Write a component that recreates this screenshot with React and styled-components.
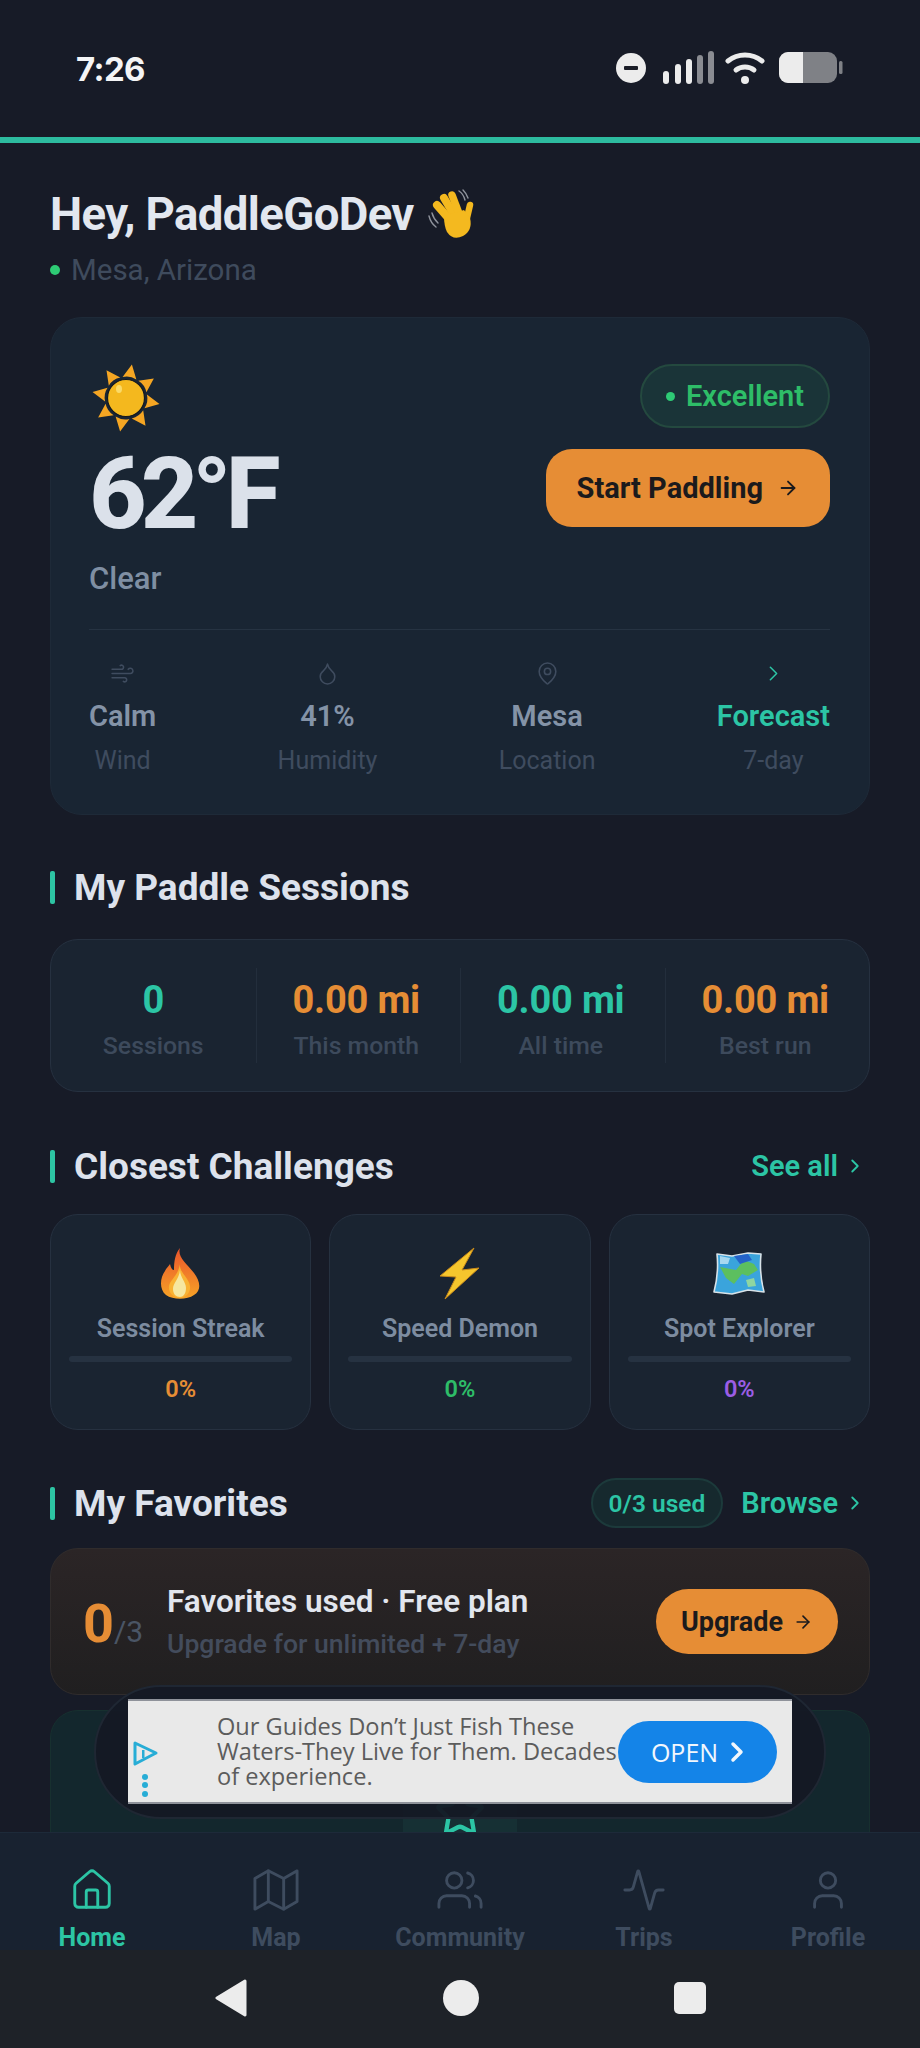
import React from "react";
import styled, { createGlobalStyle } from "styled-components";
import { House, Activity, User, Wind, Droplet, MapPin, ChevronRight, ArrowRight, Star } from "lucide-react";

const Global = createGlobalStyle`
  html, body { margin: 0; padding: 0; background: #171b27; }
  * { box-sizing: border-box; }
  body { font-family: Roboto, "Noto Sans", sans-serif; }
`;

const Page = styled.div`
  position: relative; width: 920px; height: 2048px; overflow: hidden;
  display: flex; flex-direction: column; background: #171b27;
`;

const StatusBar = styled.div`
  height: 143px; flex: none; border-bottom: 6px solid #2dbb9f; padding: 0 76px 6px;
  display: flex; align-items: center; justify-content: space-between;
`;
const Clock = styled.div`
  font: 700 33px/1 Inter, sans-serif; color: #f4f5f6; letter-spacing: -0.6px; margin-top: 7px;
`;
const StatusIcons = styled.svg` display: block; margin-right: -5px; margin-top: 5px; `;

const Main = styled.main`
  flex: 1; min-height: 0; overflow: hidden; padding: 47px 50px 0;
`;
const Greeting = styled.h1`
  margin: 0; height: 48px; display: flex; align-items: center; gap: 12px;
  font-size: 45.5px; font-weight: 700; color: #e2e7ef; letter-spacing: -0.6px; white-space: nowrap;
`;
const Place = styled.div`
  display: flex; align-items: center; gap: 11px; height: 40px; margin-top: 12px;
  font-size: 29.5px; color: #3f4b5d;
`;
const Dot = styled.span`
  width: ${p => p.$s || 10}px; height: ${p => p.$s || 10}px; border-radius: 50%; background: #2ecb75; flex: none;
`;

const WeatherCard = styled.section`
  margin-top: 27px; height: 498px; padding: 45px 39px 0 38px; border-radius: 32px;
  background: #192533; border: 1px solid #1e2a38; display: flex; flex-direction: column;
`;
const WeatherTop = styled.div`
  display: flex; justify-content: space-between; height: 267px; border-bottom: 1px solid #263342;
`;
const Conditions = styled.div` display: flex; flex-direction: column; `;
const Temp = styled.div`
  font-size: 100px; line-height: 1; font-weight: 800; color: #dbe1ea; letter-spacing: -6px; margin-top: 11px;
`;
const Sky = styled.div`
  font-size: 31px; font-weight: 500; color: #7f8fa3; margin-top: 18px; line-height: 34px;
`;
const Actions = styled.div` display: flex; flex-direction: column; align-items: flex-end; gap: 21px; padding-top: 1px; `;
const RatingPill = styled.div`
  height: 64px; padding: 0 24px; border-radius: 32px; display: flex; align-items: center; gap: 11px;
  background: #1a3438; border: 2px solid #24493f; color: #2ebd68; font-size: 29px; font-weight: 600;
`;
const PrimaryButton = styled.button`
  border: 0; background: #e68d35; color: #1b1a1c; font-family: inherit; font-weight: 700; display: flex; align-items: center; flex: none;
  height: ${p => p.$h}px; padding: 0 ${p => p.$pad}px; border-radius: ${p => p.$r}px; font-size: ${p => p.$fs}px; gap: ${p => p.$gap}px;
`;
const WeatherFacts = styled.div`
  display: flex; justify-content: space-between; padding-top: 31px;
`;
const Fact = styled.div` display: flex; flex-direction: column; align-items: center; `;
const FactValue = styled.div`
  font-size: 29px; font-weight: 600; line-height: 34px; margin-top: 13px; color: ${p => p.$accent ? "#2cc5a5" : "#8493a7"};
`;
const FactLabel = styled.div`
  font-size: 25px; line-height: 30px; margin-top: 13px; color: #3f4c5f;
`;

const SectionHead = styled.div`
  display: flex; align-items: center; justify-content: space-between; height: 50px; margin-top: ${p => p.$mt}px;
`;
const SectionTitle = styled.h2`
  margin: 0; display: flex; align-items: center; gap: 19px; font-size: 37px; font-weight: 700; color: #dde2ec;
  &::before { content: ""; width: 5px; height: 33px; border-radius: 2px; background: #2dc4a3; }
`;
const HeadRight = styled.div` display: flex; align-items: center; gap: 18px; `;
const HeadLink = styled.div`
  display: flex; align-items: center; gap: 6px; margin-right: 4px; font-size: 29px; font-weight: 600; color: #2cc5a5;
`;
const UsedPill = styled.div`
  height: 50px; padding: 0 16px; border-radius: 25px; display: flex; align-items: center;
  background: #16292e; border: 2px solid #1c3a3b; color: #2cc5a5; font-size: 24.5px; font-weight: 600;
`;

const Panel = styled.div`
  background: #1a2431; border: 1px solid #263140; border-radius: 28px;
`;
const StatsPanel = styled(Panel)`
  margin-top: 27px; height: 153px; padding: 28px 0; display: grid; grid-template-columns: repeat(4, 1fr);
`;
const Stat = styled.div`
  display: flex; flex-direction: column; align-items: center; padding-top: 12px;
  & + & { border-left: 1px solid #232e3c; padding-right: 4px; }
`;
const StatValue = styled.div`
  font-size: 38px; line-height: 40px; font-weight: 700; letter-spacing: -0.2px; color: ${p => p.$c};
`;
const StatLabel = styled.div`
  font-size: 24.8px; line-height: 30px; margin-top: 11px; font-weight: 500; color: #3d4a5c;
`;

const ChallengeGrid = styled.div`
  margin-top: 23px; display: grid; grid-template-columns: repeat(3, 1fr); gap: 18px;
`;
const ChallengeCard = styled(Panel)`
  height: 216px; padding: 25px 18px 0; display: flex; flex-direction: column; align-items: center;
`;
const ChallengeArt = styled.svg` display: block; height: 70px; width: 70px; flex: none; `;
const ChallengeName = styled.div`
  font-size: 25px; font-weight: 600; line-height: 30px; margin-top: 4px; color: #7d8ca0; white-space: nowrap;
`;
const Track = styled.div`
  width: 100%; height: 6px; border-radius: 3px; background: #263241; margin-top: 12px; flex: none;
`;
const Percent = styled.div`
  font-size: 23.5px; font-weight: 600; line-height: 28px; margin-top: 13px; color: ${p => p.$c};
`;

const PlanCard = styled.div`
  margin-top: 20px; height: 147px; padding: 0 31px 0 32px; border-radius: 28px; display: flex; align-items: center;
  border: 1px solid #302c2c; background: linear-gradient(180deg, #2b2526 0%, #201f20 100%);
`;
const Count = styled.div`
  display: flex; align-items: baseline; width: 84px; flex: none; font-size: 54px; font-weight: 700; color: #e68d35; margin-top: 4px;
  small { font-size: 30px; font-weight: 400; color: #4a5565; }
`;
const PlanText = styled.div` flex: 1; white-space: nowrap; `;
const PlanTitle = styled.div` font-size: 31.5px; font-weight: 600; line-height: 36px; color: #e2e6ee; `;
const PlanSub = styled.div` font-size: 26.6px; font-weight: 500; line-height: 30px; margin-top: 9px; color: #434c5c; `;

const PromoCard = styled.div`
  margin-top: 15px; height: 300px; padding-top: 52px; border-radius: 28px; display: flex; justify-content: center; align-items: flex-start;
  border: 1px solid #17302f; background: #13272d;
`;
const PromoTile = styled.div`
  width: 114px; height: 100px; border-radius: 26px; display: flex; align-items: center; justify-content: center;
  background: #163034; color: #2cc5a5;
`;

const BottomNav = styled.nav`
  flex: none; height: 118px; background: #182230; border-top: 1px solid #1d2a39;
  display: grid; grid-template-columns: repeat(5, 1fr); padding-top: 34px;
`;
const NavItem = styled.div`
  display: flex; flex-direction: column; align-items: center; gap: 10px;
  color: ${p => p.$active ? "#2cc5a5" : "#3e4c5f"};
`;
const NavLabel = styled.div` font-size: 25px; font-weight: 700; line-height: 30px; `;

const SystemNav = styled.div`
  flex: none; height: 98px; background: #1e2228; display: flex; align-items: center; justify-content: center; gap: 195px; padding-bottom: 2px;
`;

const AdShell = styled.aside`
  position: absolute; left: 94px; top: 1685px; width: 732px; height: 134px; border-radius: 67px; padding: 12px 32px;
  background: rgba(21, 25, 36, 0.96); border: 2px solid #1f2733;
`;
const AdBanner = styled.div`
  width: 664px; height: 105px; background: #e9e9e9; display: flex; align-items: center; position: relative;
  border-top: 2px solid #8f929a; border-bottom: 2px solid #8f929a;
`;
const AdMark = styled.svg` position: absolute; left: 4px; top: 38px; `;
const AdCopy = styled.div`
  margin-left: 89px; width: 312px; flex: none; font-family: "Open Sans", sans-serif; white-space: nowrap; font-size: 23.6px; line-height: 25px; color: #5c5c5c;
`;
const AdOpen = styled.div`
  margin-left: 89px; width: 159px; height: 62px; border-radius: 31px; background: #1484e8; color: #f2f7fd;
  display: flex; align-items: center; justify-content: center; gap: 12px; font-family: "Open Sans", sans-serif; font-size: 25px;
`;

const strokeProps = { fill: "none", stroke: "currentColor", strokeWidth: 1.5, strokeLinecap: "round", strokeLinejoin: "round" };
const FoldedMap = ({ size }) => (
  <svg width={size} height={size} viewBox="0 0 24 24" {...strokeProps}>
    <path d="M1 6v16l7-4 8 4 7-4V2l-7 4-8-4z" />
    <path d="M8 2v16M16 6v16" />
  </svg>
);
const People = ({ size }) => (
  <svg width={size} height={size} viewBox="0 0 24 24" {...strokeProps}>
    <path d="M17 21v-2a4 4 0 0 0-4-4H5a4 4 0 0 0-4 4v2" />
    <circle cx="9" cy="7" r="4" />
    <path d="M23 21v-2a4 4 0 0 0-3-3.87" />
    <path d="M16 3.13a4 4 0 0 1 0 7.75" />
  </svg>
);

const Wave = () => (
  <svg width="52" height="56" viewBox="6 6 52 56" style={{ flex: "none" }}>
    <g fill="none" stroke="#f4b91f" strokeLinecap="round">
      <path d="M17 25 L31 41" strokeWidth="8" />
      <path d="M24 18 L36 38" strokeWidth="8" />
      <path d="M32 15 L40 36" strokeWidth="7.5" />
      <path d="M50 25 L46 42" strokeWidth="6.5" />
    </g>
    <path d="M24 36 L44 30 L50 38 Q53 50 43 56 Q33 61 27 52 Q24 46 24 36Z" fill="#f4b91f" />
    <g stroke="#8f939c" strokeWidth="1.4" fill="none" strokeLinecap="round">
      <path d="M39 11c3 2 5 5 6 9" />
      <path d="M43 10c3 3 4 5 5 8" />
      <path d="M9 36c1 4 3 8 7 11" />
      <path d="M12 33c1 4 3 7 6 10" />
    </g>
  </svg>
);

const Sun = () => (
  <svg width="70" height="70" viewBox="7 7 70 70" style={{ display: "block", flex: "none", marginLeft: 2 }}>
    <g fill="#f5a623">
      {[10, 55, 100, 145, 190, 235, 280, 325].map(a => (
        <path key={a} d="M42 8 L49 22 Q42 19 35 22 Z" transform={`rotate(${a} 42 42)`} />
      ))}
    </g>
    <circle cx="42" cy="42" r="18.5" fill="#f4b81e" stroke="#14181f" strokeWidth="1.2" />
    <ellipse cx="35" cy="33" rx="3" ry="4" fill="#fbe27a" opacity=".8" />
  </svg>
);

const Fire = () => (
  <ChallengeArt viewBox="-4 0 70 70">
    <defs>
      <linearGradient id="flame" x1="0" y1="0" x2="0" y2="1">
        <stop offset="0" stopColor="#e9542c" />
        <stop offset="1" stopColor="#f7a326" />
      </linearGradient>
    </defs>
    <path d="M30 8C27 17 37 24 44 33C50 41 52 50 44 55C37 60 23 60 16 55C9 49 10 38 15 31C16 28 19 26 20 24C21 28 22 30 24 30C24 22 25 14 30 8Z" fill="url(#flame)" />
    <path d="M30 24C29 32 39 38 40 46C41 53 35 58 30 58C24 58 18 53 19 46C20 40 28 36 30 24Z" fill="#f9b233" />
    <path d="M30 30C30 37 36 42 36 48C36 54 33 57 30 57C26 57 23 54 23 49C23 43 29 39 30 30Z" fill="#f6e7a0" />
  </ChallengeArt>
);
const Bolt = () => (
  <ChallengeArt viewBox="5 0 70 70">
    <path d="M54 8 20 36 36 37 25 59 59 28 42 30z" fill="#f6c62d" stroke="#c98a1a" strokeWidth="1" strokeLinejoin="round" />
  </ChallengeArt>
);
const WorldMap = () => (
  <ChallengeArt viewBox="0 0 70 70">
    <path d="M13 14 28 16 44 13 57 14Q55 33 60 52L44 50 28 54 10 52Q15 33 13 14Z" fill="#3aa4dc" stroke="#d7e2e8" strokeWidth="1.6" strokeLinejoin="round" />
    <path d="M16 27 32 30 40 20 50 24 54 30 44 36 38 34 30 44 22 38Z" fill="#5cbf5f" />
    <path d="M30 16 44 14 48 20 36 24Z" fill="#2463c9" />
    <path d="M16 16 26 18 24 24 16 24Z" fill="#a7d8f0" />
    <path d="M42 40 50 38 52 46 44 47Z" fill="#8fd6a0" />
  </ChallengeArt>
);

const facts = [
  { Icon: Wind, value: "Calm", label: "Wind" },
  { Icon: Droplet, value: "41%", label: "Humidity" },
  { Icon: MapPin, value: "Mesa", label: "Location" },
  { Icon: ChevronRight, value: "Forecast", label: "7-day", accent: true },
];
const stats = [
  { v: "0", l: "Sessions", c: "#2cc5a5" },
  { v: "0.00 mi", l: "This month", c: "#e68d35" },
  { v: "0.00 mi", l: "All time", c: "#2cc5a5" },
  { v: "0.00 mi", l: "Best run", c: "#e68d35" },
];
const challenges = [
  { Art: Fire, n: "Session Streak", c: "#e68d35" },
  { Art: Bolt, n: "Speed Demon", c: "#2ebd68" },
  { Art: WorldMap, n: "Spot Explorer", c: "#9b5de5" },
];
const navs = [
  { Icon: House, l: "Home", active: true },
  { Icon: FoldedMap, l: "Map" },
  { Icon: People, l: "Community" },
  { Icon: Activity, l: "Trips" },
  { Icon: User, l: "Profile" },
];

export default function App() {
  return (
    <Page>
      <Global />
      <StatusBar>
        <Clock>7:26</Clock>
        <StatusIcons width="233" height="36" viewBox="0 0 233 36">
          <circle cx="15" cy="18" r="15" fill="#ececec" />
          <rect x="8" y="16" width="14" height="4" rx="1" fill="#1a1d27" />
          <g fill="#ececec">
            <rect x="47" y="21" width="6" height="13" rx="3" />
            <rect x="59" y="14" width="6" height="20" rx="3" />
            <rect x="70" y="9" width="6" height="25" rx="3" />
            <rect x="81" y="5" width="6" height="29" rx="3" fill="#8a8c92" />
            <rect x="92" y="1" width="6" height="33" rx="3" fill="#8a8c92" />
          </g>
          <g fill="none" stroke="#ececec" strokeWidth="5" strokeLinecap="round">
            <path d="M112 11c10-8 24-8 34 0" />
            <path d="M120 20c5-4 13-4 18 0" />
          </g>
          <circle cx="129" cy="30" r="4" fill="#ececec" />
          <g transform="translate(3 0)">
            <rect x="160" y="2" width="58" height="31" rx="9" fill="#7f8186" />
            <path d="M169 2h15v31h-15a9 9 0 0 1-9-9V11a9 9 0 0 1 9-9z" fill="#ececec" />
            <rect x="220" y="11" width="3.5" height="13" rx="1.5" fill="#7f8186" />
          </g>
        </StatusIcons>
      </StatusBar>

      <Main>
        <Greeting>Hey, PaddleGoDev <Wave /></Greeting>
        <Place><Dot />Mesa, Arizona</Place>

        <WeatherCard>
          <WeatherTop>
            <Conditions>
              <Sun />
              <Temp>62°F</Temp>
              <Sky>Clear</Sky>
            </Conditions>
            <Actions>
              <RatingPill><Dot $s={9} />Excellent</RatingPill>
              <PrimaryButton $h={78} $pad={31} $r={26} $fs={29} $gap={14}>
                Start Paddling <ArrowRight size={22} strokeWidth={2} />
              </PrimaryButton>
            </Actions>
          </WeatherTop>
          <WeatherFacts>
            {facts.map(({ Icon, value, label, accent }) => (
              <Fact key={label}>
                <Icon size={25} strokeWidth={1.5} color={accent ? "#2cc5a5" : "#3f4c5f"} />
                <FactValue $accent={accent}>{value}</FactValue>
                <FactLabel>{label}</FactLabel>
              </Fact>
            ))}
          </WeatherFacts>
        </WeatherCard>

        <SectionHead $mt={47}><SectionTitle>My Paddle Sessions</SectionTitle></SectionHead>
        <StatsPanel>
          {stats.map(s => (
            <Stat key={s.l}>
              <StatValue $c={s.c}>{s.v}</StatValue>
              <StatLabel>{s.l}</StatLabel>
            </Stat>
          ))}
        </StatsPanel>

        <SectionHead $mt={49}>
          <SectionTitle>Closest Challenges</SectionTitle>
          <HeadLink>See all <ChevronRight size={22} strokeWidth={2} /></HeadLink>
        </SectionHead>
        <ChallengeGrid>
          {challenges.map(({ Art, n, c }) => (
            <ChallengeCard key={n}>
              <Art />
              <ChallengeName>{n}</ChallengeName>
              <Track />
              <Percent $c={c}>0%</Percent>
            </ChallengeCard>
          ))}
        </ChallengeGrid>

        <SectionHead $mt={48}>
          <SectionTitle>My Favorites</SectionTitle>
          <HeadRight>
            <UsedPill>0/3 used</UsedPill>
            <HeadLink>Browse <ChevronRight size={22} strokeWidth={2} /></HeadLink>
          </HeadRight>
        </SectionHead>
        <PlanCard>
          <Count>0<small>/3</small></Count>
          <PlanText>
            <PlanTitle>Favorites used · Free plan</PlanTitle>
            <PlanSub>Upgrade for unlimited + 7-day</PlanSub>
          </PlanText>
          <PrimaryButton $h={65} $pad={25} $r={33} $fs={27} $gap={10}>
            Upgrade <ArrowRight size={20} strokeWidth={2} />
          </PrimaryButton>
        </PlanCard>
        <PromoCard>
          <PromoTile><Star size={52} strokeWidth={2} /></PromoTile>
        </PromoCard>
      </Main>

      <BottomNav>
        {navs.map(({ Icon, l, active }) => (
          <NavItem key={l} $active={active}>
            <Icon size={46} strokeWidth={1.5} />
            <NavLabel>{l}</NavLabel>
          </NavItem>
        ))}
      </BottomNav>

      <SystemNav>
        <svg width="34" height="38" viewBox="0 0 34 38"><path d="M31 2 3 19l28 17z" fill="#ececec" stroke="#ececec" strokeWidth="3" strokeLinejoin="round" /></svg>
        <svg width="36" height="36" viewBox="0 0 36 36"><circle cx="18" cy="18" r="18" fill="#ececec" /></svg>
        <svg width="32" height="32" viewBox="0 0 32 32"><rect width="32" height="32" rx="5" fill="#ececec" /></svg>
      </SystemNav>

      <AdShell>
        <AdBanner>
          <AdMark width="28" height="62" viewBox="0 0 28 62">
            <path d="M3 4 24 14 3 25z" fill="none" stroke="#27add6" strokeWidth="3" strokeLinejoin="round" />
            <rect x="10" y="11" width="2.5" height="8" fill="#27add6" />
            <circle cx="13" cy="38" r="3" fill="#27add6" />
            <circle cx="13" cy="46" r="3" fill="#27add6" />
            <circle cx="13" cy="55" r="3" fill="#27add6" />
          </AdMark>
          <AdCopy>Our Guides Don’t Just Fish These<br />Waters-They Live for Them. Decades<br />of experience.</AdCopy>
          <AdOpen>OPEN <svg width="14" height="22" viewBox="0 0 14 22"><path d="M3 3l8 8-8 8" fill="none" stroke="#f2f7fd" strokeWidth="3.5" strokeLinecap="round" strokeLinejoin="round" /></svg></AdOpen>
        </AdBanner>
      </AdShell>
    </Page>
  );
}
